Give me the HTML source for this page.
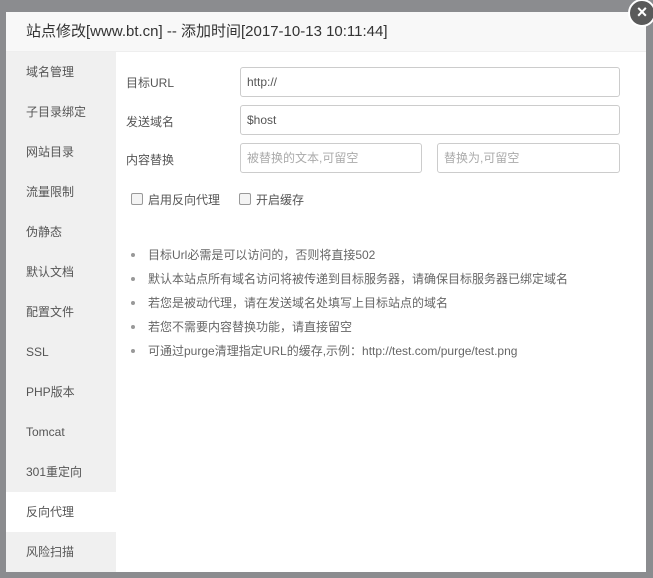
<!DOCTYPE html>
<html><head><meta charset="utf-8"><style>
body{margin:0;width:653px;height:578px;background:#8b8c8f;position:relative;overflow:hidden;font-family:"Liberation Sans","Noto Sans CJK SC",sans-serif;font-size:12px;color:#555}
.dlg{position:absolute;left:6px;top:12px;width:640px;height:560px;background:#fff}
.hd{height:39px;border-bottom:1px solid #eee;background:#f8f8f8;line-height:39px;padding-left:20px;font-size:15px;color:#333}
.side{position:absolute;left:0;top:40px;width:110px;height:520px;background:#f0f0f0}
.side div{height:40px;line-height:40px;padding-left:20px;color:#555}
.side .on{background:#fff}
.lbl{position:absolute;left:126px;color:#555}
.in{position:absolute;border:1px solid #ccc;border-radius:3px;height:28px;line-height:28px;padding-left:6px;box-sizing:content-box;color:#555}
.ph{color:#aaa}
.cb{position:absolute;top:193px;width:10px;height:10px;border:1px solid #999;border-radius:2px;background:#f4f4f4}
.ul{position:absolute;left:126px;top:243px;color:#666}
.ul div{height:24px;line-height:24px;position:relative;padding-left:22px}
.ul div:before{content:"";position:absolute;left:5px;top:10px;width:4px;height:4px;border-radius:50%;background:#999}
.x{position:absolute;left:628px;top:-1px;width:24px;height:24px;border-radius:50%;background:#5a5a5a;border:2px solid #fff;color:#fff;font-size:18px;line-height:23px;text-align:center;font-weight:bold}
</style></head><body>
<div class="dlg">
<div class="hd">站点修改[www.bt.cn] -- 添加时间[2017-10-13 10:11:44]</div>
<div class="side"><div>域名管理</div><div>子目录绑定</div><div>网站目录</div><div>流量限制</div><div>伪静态</div><div>默认文档</div><div>配置文件</div><div>SSL</div><div>PHP版本</div><div>Tomcat</div><div>301重定向</div><div class="on">反向代理</div><div>风险扫描</div></div>
</div>
<div class="lbl" style="top:74px">目标URL</div>
<div class="in" style="left:240px;top:67px;width:372px">http://</div>
<div class="lbl" style="top:113px">发送域名</div>
<div class="in" style="left:240px;top:105px;width:372px">$host</div>
<div class="lbl" style="top:151px">内容替换</div>
<div class="in ph" style="left:240px;top:143px;width:174px">被替换的文本,可留空</div>
<div class="in ph" style="left:437px;top:143px;width:175px">替换为,可留空</div>
<div class="cb" style="left:131px"></div><div class="lbl" style="left:148px;top:191px">启用反向代理</div>
<div class="cb" style="left:239px"></div><div class="lbl" style="left:256px;top:191px">开启缓存</div>
<div class="ul">
<div>目标Url必需是可以访问的，否则将直接502</div>
<div>默认本站点所有域名访问将被传递到目标服务器，请确保目标服务器已绑定域名</div>
<div>若您是被动代理，请在发送域名处填写上目标站点的域名</div>
<div>若您不需要内容替换功能，请直接留空</div>
<div>可通过purge清理指定URL的缓存,示例：http://test.com/purge/test.png</div>
</div>
<div class="x">×</div>
</body></html>
